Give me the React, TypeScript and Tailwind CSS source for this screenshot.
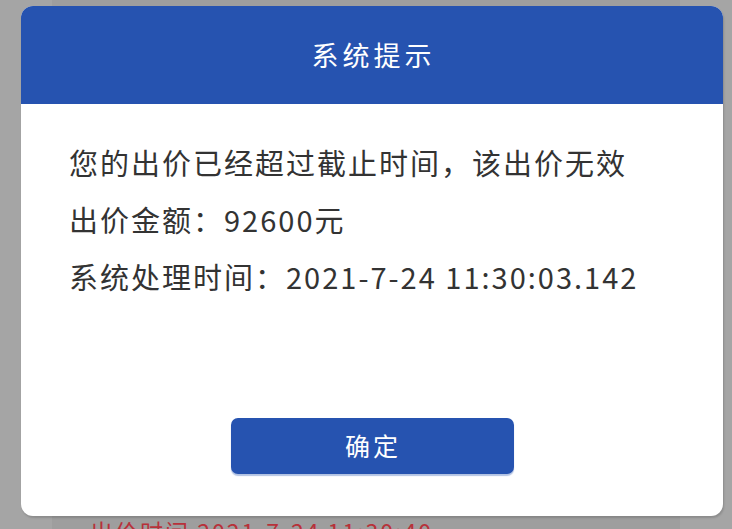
export default function App() {
  return (
    <div
      className="relative h-[529px] w-[732px] overflow-hidden bg-[#a5a5a5]"
      style={{ fontFamily: '"Noto Sans CJK SC", "Noto Sans", sans-serif' }}
    >
      {/* page under the overlay */}
      <div className="mx-[52px] h-full bg-[#9e9e9e] pt-[520px] pl-[38px]">
        <p className="text-[23px] leading-none tracking-[2px] text-[#b8313a]">出价时间 2021-7-24 11:30:40</p>
      </div>

      {/* modal */}
      <div className="absolute left-[21px] top-[6px] flex h-[510px] w-[702px] flex-col overflow-hidden rounded-[12px] bg-white shadow-[1px_2px_2px_rgba(0,0,0,0.15)]">
        <div className="flex h-[98px] items-center justify-center bg-[#2653b0]">
          <h2 className="pl-[3px] text-[27px] tracking-[4px] text-white">系统提示</h2>
        </div>

        <div className="flex flex-col gap-[20px] pl-[48px] pt-[40px] text-[29px] leading-[37px] tracking-[2px] text-[#333]">
          <p>您的出价已经超过截止时间，该出价无效</p>
          <p>出价金额：92600元</p>
          <p>系统处理时间：2021-7-24 11:30:03.142</p>
        </div>

        <div className="mt-auto flex justify-center pb-[42px]">
          <button className="h-[56px] w-[283px] rounded-[7px] bg-[#2653b0] pl-[2px] text-[25px] tracking-[3px] text-white shadow-[0_2px_1px_rgba(38,83,176,0.35)]">
            确定
          </button>
        </div>
      </div>
    </div>
  );
}
